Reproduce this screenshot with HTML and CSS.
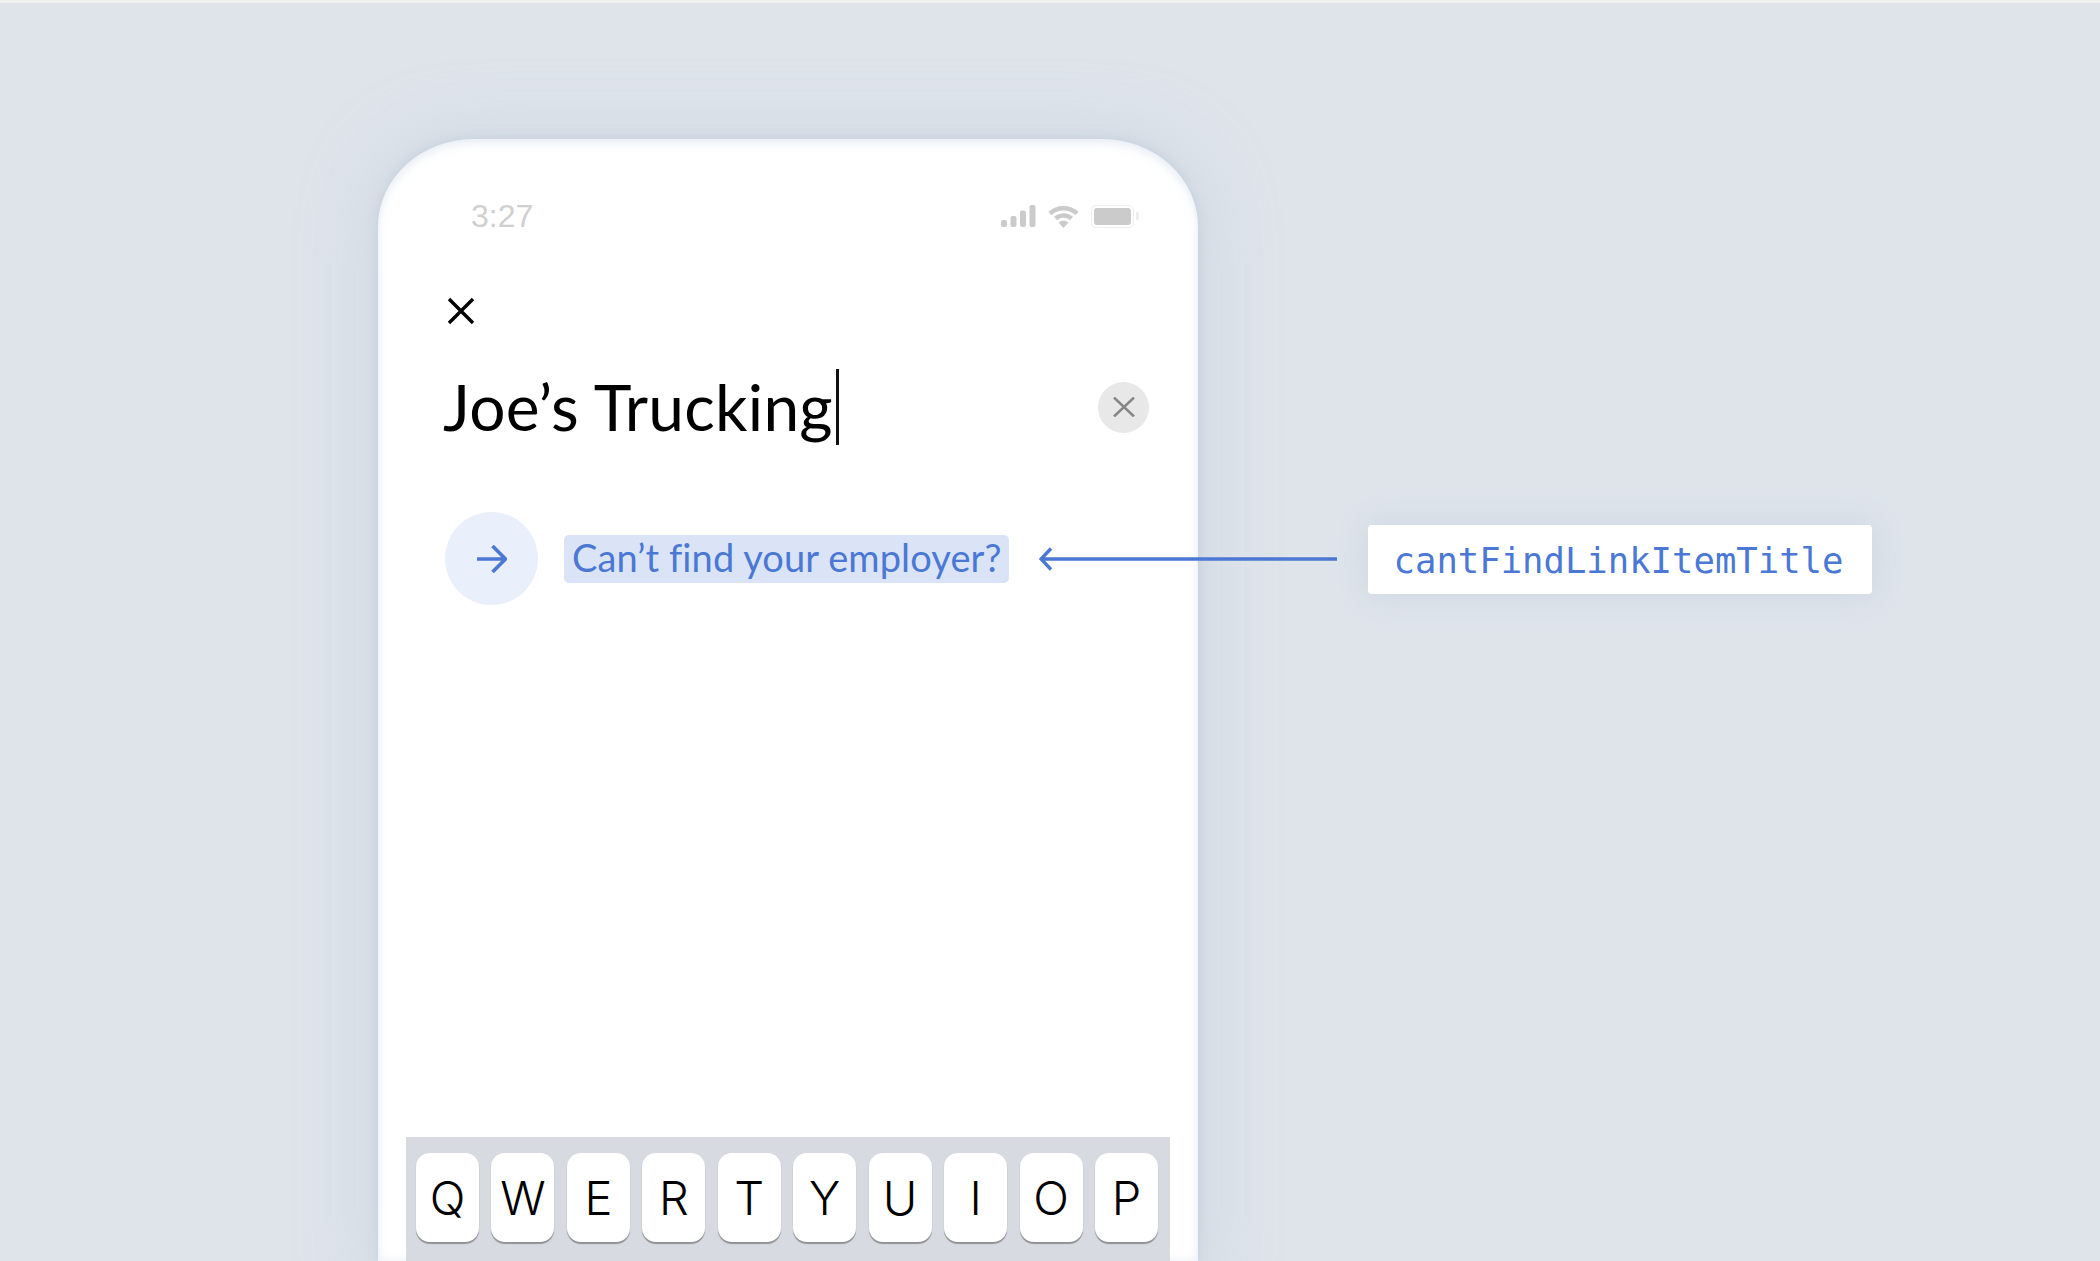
FILE: index.html
```html
<!DOCTYPE html>
<html lang="en">
<head>
<meta charset="utf-8">
<title>cantFindLinkItemTitle</title>
<link rel="stylesheet" href="styles.css">
</head>
<body>
<main class="stage">
  <section class="phone">
    <div class="status">
      <span class="time">3:27</span>
      <div class="status-icons">
        <svg class="signal" width="35" height="22" viewBox="0 0 35 22"><rect x="0" y="15" width="6" height="7" rx="2"/><rect x="9.500" y="11" width="6" height="11" rx="2"/><rect x="19" y="5.500" width="6" height="16.500" rx="2"/><rect x="28.500" y="0" width="6" height="22" rx="2"/></svg>
        <svg class="wifi" width="31" height="23" viewBox="0 0 31 23"><path d="M2 8.500 C9.500 1.500 21.500 1.500 29 8.500" fill="none" stroke="#cbcbcb" stroke-width="4.500"/><path d="M7.500 13.500 C12 9.500 19 9.500 23.500 13.500" fill="none" stroke="#cbcbcb" stroke-width="4.500"/><path d="M10.500 17.500 C13.500 15 17.500 15 20.500 17.500 L15.500 23 Z" fill="#cbcbcb"/></svg>
        <div class="battery"><span class="battery-fill"></span></div>
        <span class="battery-nub"></span>
      </div>
    </div>
    <svg class="close" width="28" height="28" viewBox="0 0 28 28"><path d="M2 2 L26 26 M26 2 L2 26" fill="none" stroke="#000" stroke-width="3.400"/></svg>
    <div class="search">
      <h1 class="query">Joe’s Trucking<span class="caret"></span></h1>
      <button class="clear" type="button" aria-label="Clear">
        <svg width="22" height="20" viewBox="0 0 22 20"><path d="M1 0.500 L21 19.500 M21 0.500 L1 19.500" fill="none" stroke="#858585" stroke-width="2.500"/></svg>
      </button>
    </div>
    <div class="link-row">
      <span class="link-icon">
        <svg width="30" height="28" viewBox="0 0 30 28"><path d="M0 14 H28 M15.500 1 L28.500 14 L15.500 27" fill="none" stroke="#4a78d4" stroke-width="3.600"/></svg>
      </span>
      <span class="link-text">Can’t find your employer?</span>
    </div>
    <div class="keyboard">
      <span class="key">Q</span><span class="key">W</span><span class="key">E</span><span class="key">R</span><span class="key">T</span><span class="key">Y</span><span class="key">U</span><span class="key">I</span><span class="key">O</span><span class="key">P</span>
    </div>
  </section>
  <div class="annotation">
    <svg class="pointer" width="298" height="24" viewBox="0 0 298 24"><path d="M298 12 H2 M12 1.500 L2 12 L12 22.500" fill="none" stroke="#4a78d4" stroke-width="3.400"/></svg>
    <code class="tag">cantFindLinkItemTitle</code>
  </div>
</main>
</body>
</html>
```

FILE: styles.css
```css
* { box-sizing: border-box; }
html, body { margin: 0; height: 100%; }
body { overflow: hidden; background: #dfe4eb; }
.stage {
  position: relative;
  height: 1261px;
  overflow: hidden;
  padding: 136px 0 0 378px;
  background: #dfe4eb;
  border-top: 3px solid #f1f1f1;
}
.phone {
  display: flex;
  flex-direction: column;
  width: 820px;
  height: 1122px;
  padding: 0 28px;
  background: #fff;
  border-radius: 96px 96px 0 0 / 88px 88px 0 0;
  box-shadow: 0 0 12px rgba(182, 198, 212, .6), 0 4px 60px 14px rgba(196, 210, 222, .55), inset 0 8px 12px -4px rgba(222, 229, 238, .55), inset 0 0 8px rgba(210, 220, 234, .45);
}
.status {
  display: flex;
  justify-content: space-between;
  align-items: center;
  height: 24px;
  margin-top: 65px;
  padding: 0 31px 0 65px;
}
.time { font: 32px/24px "Liberation Sans", sans-serif; color: #d0d0d0; }
.status-icons { display: flex; align-items: center; }
.signal { fill: #cbcbcb; margin-right: 12px; }
.wifi { margin-right: 12px; }
.battery {
  width: 43px;
  height: 23px;
  padding: 2px;
  border: 1px solid #eee;
  border-radius: 5px;
  display: flex;
}
.battery-fill { flex: 1; background: #cbcbcb; border-radius: 3px; }
.battery-nub { width: 3px; height: 8px; margin-left: 2px; background: #eee; border-radius: 0 2px 2px 0; }
.close { margin: 69px 0 0 41px; flex: none; }
.search {
  display: flex;
  align-items: center;
  justify-content: space-between;
  margin-top: 42px;
  padding: 0 21px 0 37px;
  height: 80px;
}
.query {
  margin: 0;
  display: flex;
  align-items: center;
  font: 400 64px/78px Lato, sans-serif;
  letter-spacing: .25px;
  color: #000;
}
.caret { width: 3px; height: 76px; margin-left: 3px; background: #111; }
.clear {
  display: flex;
  align-items: center;
  justify-content: center;
  width: 51px;
  height: 51px;
  padding: 0;
  border: 0;
  border-radius: 50%;
  background: #e8e8e8;
}
.link-row {
  display: flex;
  align-items: center;
  margin: 65px 0 0 39px;
  gap: 26px;
}
.link-icon {
  display: flex;
  align-items: center;
  justify-content: center;
  width: 93px;
  height: 93px;
  border-radius: 50%;
  background: #e9effb;
}
.link-text {
  padding: 0 7px 0 8px;
  height: 48px;
  font: 38px/45px Lato, sans-serif;
  letter-spacing: .1px;
  color: #4a78d4;
  background: #dbe4f6;
  border-radius: 5px;
  white-space: nowrap;
}
.keyboard {
  display: flex;
  justify-content: space-between;
  height: 124px;
  margin-top: auto;
  padding: 16px 12px 0 10px;
  background: #d7dbe1;
}
.key {
  display: flex;
  align-items: center;
  justify-content: center;
  width: 63px;
  height: 89px;
  background: #fff;
  border-radius: 14px;
  box-shadow: 0 2px 1px #8f9194;
  font: 300 47px/1 Inter, sans-serif;
  color: #000;
}
.annotation {
  position: absolute;
  left: 1039px;
  top: 522px;
  display: flex;
  align-items: center;
  gap: 31px;
}
.pointer { margin-top: -1px; }
.tag {
  width: 504px;
  height: 69px;
  padding: 2px 3px 0 0;
  text-align: center;
  font: 35.600px/67px "DejaVu Sans Mono", monospace;
  color: #4a78d4;
  background: #fff;
  border-radius: 4px;
  box-shadow: 0 0 30px rgba(176, 196, 214, .45);
}
```
